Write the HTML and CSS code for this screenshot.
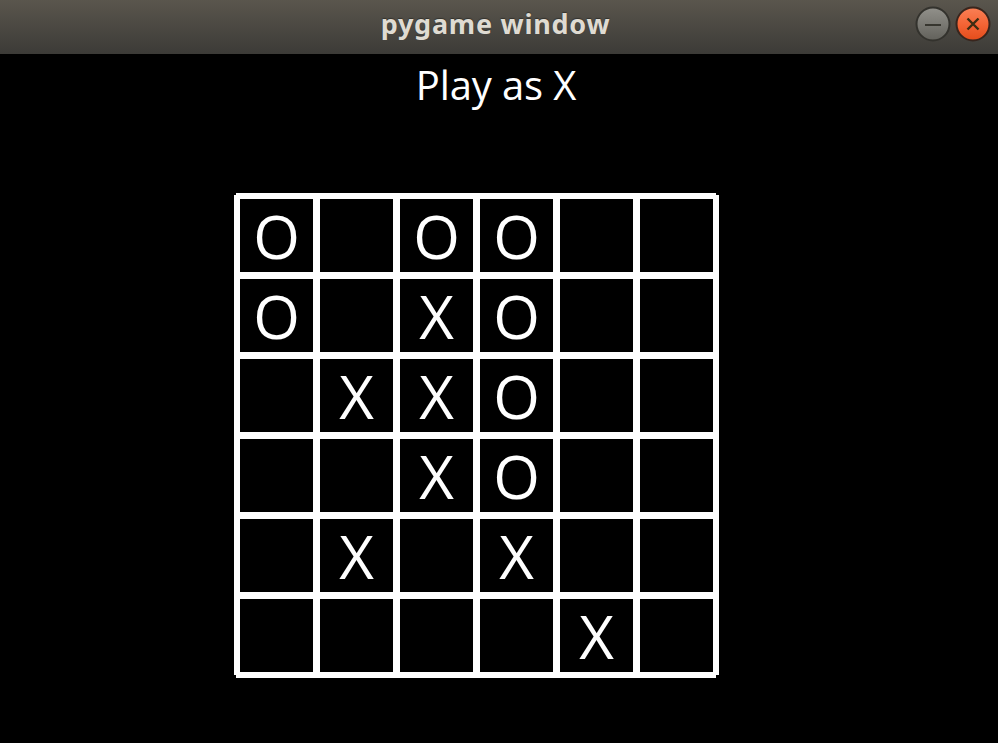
FILE: index.html
```html
<!DOCTYPE html>
<html lang="en">
<head>
<meta charset="utf-8">
<title>pygame window</title>
<link rel="stylesheet" href="styles.css">
</head>
<body>
<header class="titlebar">
  <h1 class="title">pygame window</h1>
  <div class="controls">
    <svg class="control" viewBox="0 0 36 36" role="img" aria-label="Minimize">
      <defs><linearGradient id="gray" x1="0" y1="0" x2="0" y2="1"><stop offset="0" stop-color="#92918b"/><stop offset="1" stop-color="#62615b"/></linearGradient></defs>
      <circle cx="18" cy="18" r="16.5" fill="url(#gray)" stroke="#33322d" stroke-width="2"/>
      <path d="M10 19H26" stroke="#37362f" stroke-width="2"/>
    </svg>
    <svg class="control" viewBox="0 0 36 36" role="img" aria-label="Close">
      <defs><linearGradient id="orange" x1="0" y1="0" x2="0" y2="1"><stop offset="0" stop-color="#fa8056"/><stop offset=".5" stop-color="#f46536"/><stop offset="1" stop-color="#e34b1a"/></linearGradient></defs>
      <circle cx="18" cy="18" r="16.5" fill="url(#orange)" stroke="#38251d" stroke-width="2"/>
      <path d="M12.5 12.5L23.5 23.5M23.5 12.5L12.5 23.5" stroke="#3e2c12" stroke-width="2.4"/>
    </svg>
  </div>
</header>
<main class="game">
  <h2 class="status">Play as X</h2>
  <div class="board">
    <div>O</div><div></div><div>O</div><div>O</div><div></div><div></div>
    <div>O</div><div></div><div>X</div><div>O</div><div></div><div></div>
    <div></div><div>X</div><div>X</div><div>O</div><div></div><div></div>
    <div></div><div></div><div>X</div><div>O</div><div></div><div></div>
    <div></div><div>X</div><div></div><div>X</div><div></div><div></div>
    <div></div><div></div><div></div><div></div><div>X</div><div></div>
  </div>
</main>
</body>
</html>
```
FILE: styles.css
```css
* { box-sizing: border-box; }
body {
  margin: 0;
  height: 743px;
  overflow: hidden;
  background: #000;
  color: #fff;
  font-family: "Open Sans", sans-serif;
}
.titlebar {
  display: grid;
  grid-template-columns: 1fr auto 1fr;
  height: 54px;
  padding: 0 7px 0 0;
  background: linear-gradient(#5a564d, #3c3b37);
}
.title {
  grid-column: 2;
  margin: 0;
  font-family: "Noto Sans", sans-serif;
  font-size: 27px;
  font-weight: 700;
  letter-spacing: 0.75px;
  line-height: 48px;
  color: #dfdbd2;
  text-shadow: 0 -1px 1px #33322e;
  white-space: nowrap;
}
.controls {
  display: flex;
  justify-content: flex-end;
  gap: 4px;
  padding-top: 6px;
}
.control { width: 36px; height: 36px; }
.game { display: flex; flex-direction: column; }
.status {
  margin: 4px 6px 81px 0;
  font-size: 40px;
  font-weight: 380;
  letter-spacing: -0.15px;
  line-height: 54px;
  text-align: center;
}
.board {
  display: grid;
  grid-template-columns: repeat(6, 73px);
  grid-auto-rows: 73px;
  gap: 7px;
  width: 485px;
  margin-left: 234px;
  padding: 6px;
  background: #fff;
  clip-path: polygon(2px 0, 482px 0, 482px 2px, 485px 2px, 485px 482px, 482px 482px, 482px 485px, 2px 485px, 2px 482px, 0 482px, 0 2px, 2px 2px);
}
.board > div {
  height: 73px;
  background: #000;
  font-size: 60px;
  font-weight: 380;
  line-height: 75px;
  text-align: center;
}
```
